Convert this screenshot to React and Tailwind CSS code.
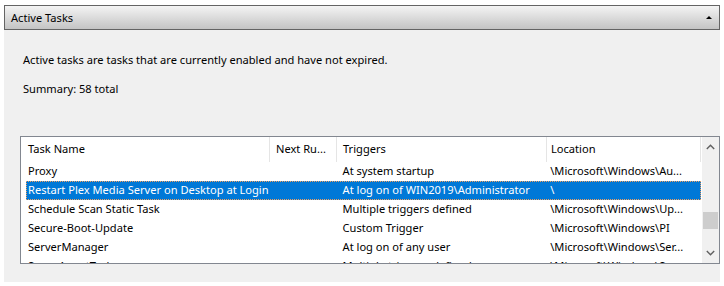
import React from 'react';

const ROWS = [
  { name: 'Proxy', next: '', trig: 'At system startup', loc: '\\Microsoft\\Windows\\Au...' },
  { name: 'Restart Plex Media Server on Desktop at Login', next: '', trig: 'At log on of WIN2019\\Administrator', loc: '\\', selected: true },
  { name: 'Schedule Scan Static Task', next: '', trig: 'Multiple triggers defined', loc: '\\Microsoft\\Windows\\Up...' },
  { name: 'Secure-Boot-Update', next: '', trig: 'Custom Trigger', loc: '\\Microsoft\\Windows\\PI' },
  { name: 'ServerManager', next: '', trig: 'At log on of any user', loc: '\\Microsoft\\Windows\\Ser...' },
  { name: 'SpaceAgentTask', next: '', trig: 'Multiple triggers defined', loc: '\\Microsoft\\Windows\\Sp...' },
];

const ChevronUp = () => (
  <svg width="9" height="6" viewBox="0 0 9 6" fill="none">
    <path d="M0.8 5L4.5 1.3L8.2 5" stroke="#606060" strokeWidth="1.4" />
  </svg>
);

const ChevronDown = () => (
  <svg width="9" height="6" viewBox="0 0 9 6" fill="none">
    <path d="M0.8 1L4.5 4.7L8.2 1" stroke="#606060" strokeWidth="1.4" />
  </svg>
);

const App = () => {
  return (
    <div
      className="w-[724px] h-[286px] bg-white pt-[5px] px-[4px] text-[11.1px] text-black overflow-hidden"
      style={{ fontFamily: '"Noto Sans", "DejaVu Sans", sans-serif' }}
    >
      {/* Section header */}
      <div className="h-[25px] w-[716px] border border-[#646464] bg-gradient-to-b from-[#f4f4f4] to-[#c4c4c4] flex items-center justify-between pl-[6px] pr-[7px]">
        <span className="leading-none">Active Tasks</span>
        <div className="w-0 h-0 border-l-[3px] border-r-[3px] border-b-[3px] border-l-transparent border-r-transparent border-b-black" />
      </div>

      {/* Section body */}
      <div className="w-[716px] h-[252px] bg-[#f0f0f0] flex flex-col">
        <div className="pl-[19px] mt-[22px] h-[16px] leading-[16px] shrink-0">
          Active tasks are tasks that are currently enabled and have not expired.
        </div>
        <div className="pl-[19px] mt-[13px] h-[16px] leading-[16px] shrink-0">Summary: 58 total</div>

        {/* Task list */}
        <div className="ml-[16px] mt-[39px] w-[700px] h-[128px] shrink-0 border border-[#828790] bg-white flex overflow-hidden">
          <div className="w-[680px] flex flex-col">
            <div className="h-[25px] flex shrink-0">
              <div className="w-[249px] pl-[7px] flex items-center border-r border-[#e5e5e5]">Task Name</div>
              <div className="w-[67px] pl-[6px] flex items-center border-r border-[#e5e5e5]">Next Ru...</div>
              <div className="w-[210px] pl-[6px] flex items-center border-r border-[#e5e5e5]">Triggers</div>
              <div className="w-[154px] pl-[4px] flex items-center border-r border-[#e5e5e5]">Location</div>
            </div>
            {ROWS.map((r) => (
              <div
                key={r.name}
                className={`h-[19px] ml-[5px] flex items-center whitespace-nowrap shrink-0 ${
                  r.selected ? 'bg-[#0078d7] text-white border border-dotted border-[#f0a060]' : 'border border-transparent'
                }`}
              >
                <div className="w-[243px] pl-[1px] overflow-hidden">{r.name}</div>
                <div className="w-[67px] overflow-hidden">{r.next}</div>
                <div className="w-[210px] pl-[6px] overflow-hidden">{r.trig}</div>
                <div className="w-[154px] pl-[4px] overflow-hidden">{r.loc}</div>
              </div>
            ))}
          </div>

          {/* Scrollbar */}
          <div className="w-[18px] bg-[#f0f0f0] border-l border-white flex flex-col items-center">
            <div className="h-[20px] flex items-center justify-center">
              <ChevronUp />
            </div>
            <div className="flex-1 w-full px-[1px] pt-[55px]">
              <div className="h-[17px] w-full bg-[#cdcdcd]" />
            </div>
            <div className="h-[20px] flex items-center justify-center">
              <ChevronDown />
            </div>
          </div>
        </div>
      </div>
    </div>
  );
};

export default App;
